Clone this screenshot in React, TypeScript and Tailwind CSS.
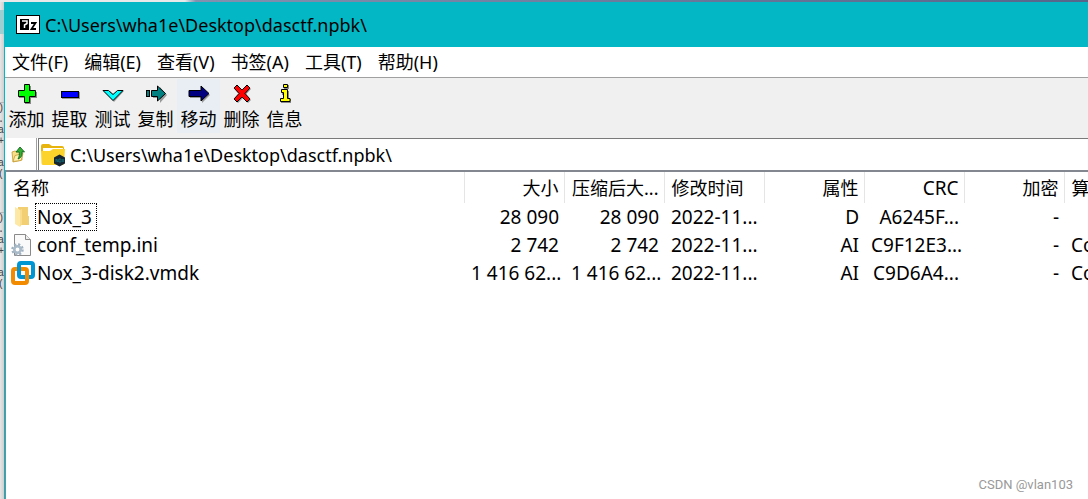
import type { ReactNode } from "react";

const menus = ["文件(F)", "编辑(E)", "查看(V)", "书签(A)", "工具(T)", "帮助(H)"];

const path = "C:\\Users\\wha1e\\Desktop\\dasctf.npbk\\";

// line ends of the editor that sits behind the window
const behind = [")", ".", "a", "+", "", "a", "("];

const PlusIcon = () => (
  <svg width="22" height="22" viewBox="0 0 22 22">
    <path d="M9 3h6v6h6v6h-6v6H9v-6H3V9h6z" fill="#888" />
    <path d="M8.5 1.5h5v6h6v6h-6v6h-5v-6h-6v-6h6z" fill="#0f0" stroke="#000" />
  </svg>
);

const MinusIcon = () => (
  <svg width="22" height="22" viewBox="0 0 22 22">
    <rect x="3" y="9" width="18" height="7" fill="#999" />
    <rect x="2.5" y="8.5" width="17" height="6" fill="#00f" stroke="#000" />
  </svg>
);

const CheckIcon = () => (
  <svg width="22" height="22" viewBox="0 0 22 22">
    <path d="M2 8h6l4 4 4-4h6L12 19z" fill="#999" />
    <path d="M1 7.5h5.5l4.500 4 4.500-4H21L11 17.500z" fill="#0ff" stroke="#000" />
  </svg>
);

const CopyIcon = () => (
  <svg width="22" height="22" viewBox="0 0 22 22">
    <path d="M8 9h7V4l7 8-7 8v-5H8z" fill="#999" />
    <path d="M6.5 7.500h6V3l8 7.500-8 7.500v-4.500h-6z" fill="#008080" stroke="#000" />
    <rect x="1.5" y="7.5" width="3" height="6" fill="#008080" stroke="#000" />
  </svg>
);

const MoveIcon = () => (
  <svg width="22" height="22" viewBox="0 0 22 22">
    <path d="M2 9h12V4l8 8-8 8v-5H2z" fill="#999" />
    <path d="M1 7.500h12V3l8 7.500-8 7.500v-4.500H1z" fill="#000080" stroke="#000" />
  </svg>
);

const DeleteIcon = () => (
  <svg width="22" height="22" viewBox="0 0 22 22">
    <path d="M4 6l3-3 5 5 5-5 3 3-5 5.500 5 5.500-3 3-5-5-5 5-3-3 5-5.500z" fill="#999" />
    <path d="M3 5l3-3 5 5 5-5 3 3-5 5.500 5 5.500-3 3-5-5-5 5-3-3 5-5.500z" fill="#f00" stroke="#000" />
  </svg>
);

const InfoIcon = () => (
  <svg width="22" height="22" viewBox="0 0 22 22">
    <path d="M10 2h5v4h-5zM8 8h7v8h2v4H7v-4h3v-4H8z" fill="#888" />
    <path d="M9.5 1.500h4v3h-4zM7.500 6.500h6v9h2.500v3h-9.500v-3h3v-6h-2z" fill="#ff0" stroke="#000" />
  </svg>
);

const tools: { label: string; icon: ReactNode; active?: boolean }[] = [
  { label: "添加", icon: <PlusIcon /> },
  { label: "提取", icon: <MinusIcon /> },
  { label: "测试", icon: <CheckIcon /> },
  { label: "复制", icon: <CopyIcon /> },
  { label: "移动", icon: <MoveIcon />, active: true },
  { label: "删除", icon: <DeleteIcon /> },
  { label: "信息", icon: <InfoIcon /> },
];

const AppIcon = () => (
  <svg width="24" height="19" viewBox="0 0 24 19" className="shrink-0">
    <rect width="24" height="19" fill="#000" />
    <rect x="1" y="1" width="22" height="17" fill="#fff" />
    <rect x="4" y="4" width="9" height="11" fill="#000" />
    <path d="M6 6h5v2.500L8.500 10v3" fill="none" stroke="#fff" strokeWidth="1.5" />
    <path d="M15 8h4.500L15.500 14H20" fill="none" stroke="#000" strokeWidth="1.8" />
  </svg>
);

const UpFolderIcon = () => (
  <svg width="15" height="17" viewBox="0 0 15 17">
    <path d="M1 6l3-1 2 1 5-1v9L2 16z" fill="#f8e08a" stroke="#c79a31" strokeWidth="0.8" />
    <path d="M2 15.500l2-6 8-2-2 7z" fill="#fdf0b0" stroke="#c79a31" strokeWidth="0.8" />
    <path d="M9 1l4.500 5-2.500-.3c.3 3.500-.5 6-4 7.300 1.500-2.500 1.500-4.500 1.200-7L5 6z" fill="#35b035" stroke="#11651b" strokeWidth="0.9" />
  </svg>
);

const NoxFolderIcon = () => (
  <svg width="25" height="24" viewBox="0 0 25 24" className="shrink-0">
    <path d="M0 3q0-2 2-2h6l3 2h10q2 0 2 2v4H0z" fill="#e6b40c" />
    <path d="M2 5h20v4H2z" fill="#fff" />
    <path d="M0 8h9l3-2h12l-1 15q0 1-2 1H2q-1.500 0-1.500-2z" fill="#fcd32a" />
    <path d="M18.500 11.500l5.500 3v6l-5.500 3-5.500-3v-6z" fill="#172431" />
    <path d="M15 16v3M15 16l2 3v-3M18 16h2v3h-2zM21 16l2 3M23 16l-2 3" fill="none" stroke="#167d8a" strokeWidth="0.7" />
  </svg>
);

const FolderIcon = () => (
  <svg width="24" height="24" viewBox="0 0 24 24" className="shrink-0">
    <path d="M7 2h10v9h1v9H7z" fill="#f3cf74" />
    <path d="M4 2l5 3v17l-5-3z" fill="#fde8a6" />
    <path d="M9 5v17l2-3V4z" fill="#f9dc8c" />
  </svg>
);

const IniIcon = () => (
  <svg width="24" height="24" viewBox="0 0 24 24" className="shrink-0">
    <path d="M3.500 1.500h11l5 5v16h-16z" fill="#fafafa" stroke="#8a8a8a" />
    <path d="M14.500 1.500v5h5" fill="#eee" stroke="#8a8a8a" />
    <circle cx="6.5" cy="16.5" r="5" fill="none" stroke="#9fb0bf" strokeWidth="2.5" strokeDasharray="2.1 1.827" />
    <circle cx="6.5" cy="16.5" r="3.2" fill="#fff" stroke="#a9bac8" strokeWidth="2.6" />
  </svg>
);

const VmdkIcon = () => (
  <svg width="24" height="24" viewBox="0 0 24 24" className="shrink-0">
    <g fill="none" strokeWidth="4">
      <rect x="8" y="2" width="14" height="14" rx="2" stroke="#0095d3" />
      <rect x="2" y="8" width="14" height="14" rx="2" stroke="#f38b00" />
      <path d="M8 5v8" stroke="#0095d3" />
    </g>
  </svg>
);

const columns = [
  { label: "名称" },
  { label: "大小", right: true },
  { label: "压缩后大...", right: true },
  { label: "修改时间" },
  { label: "属性", right: true },
  { label: "CRC", right: true, latin: true },
  { label: "加密", right: true },
  { label: "算法" },
];

const files = [
  {
    name: "Nox_3",
    icon: <FolderIcon />,
    focused: true,
    cells: ["28 090", "28 090", "2022-11...", "D", "A6245F...", "-", ""],
  },
  {
    name: "conf_temp.ini",
    icon: <IniIcon />,
    cells: ["2 742", "2 742", "2022-11...", "AI", "C9F12E3...", "-", "Copy"],
  },
  {
    name: "Nox_3-disk2.vmdk",
    icon: <VmdkIcon />,
    cells: ["1 416 62...", "1 416 62...", "2022-11...", "AI", "C9D6A4...", "-", "Copy"],
  },
];

const LineEnds = () => (
  <div className="border-t border-[#b5b5b5]">
    {behind.map((char, i) => (
      <div key={i} className="flex h-[11px] justify-end">
        {char}
      </div>
    ))}
  </div>
);

export default function App() {
  return (
    <div className="relative flex min-h-screen flex-col overflow-hidden bg-[#e9e9e9] font-['Noto_Sans','Noto_Sans_CJK_SC',sans-serif] text-lg text-black">
      {/* desktop behind the window */}
      <div className="h-[2px] shrink-0 bg-linear-to-r from-[#e9e9e9] from-17% via-[#8291ae] via-18% to-[#56658a]" />

      <div className="flex grow">
        <div
          aria-hidden="true"
          className="flex w-1 shrink-0 flex-col gap-8 overflow-hidden bg-linear-to-r from-[#e6e6e6] to-[#cfcfcf] pt-2 font-['Liberation_Mono',monospace] text-[10px] leading-[11px] text-[#444]"
        >
          <div className="mb-9 h-6 shrink-0 bg-[#9ccfd2]" />
          <LineEnds />
          <LineEnds />
        </div>

        <main className="flex min-w-0 grow flex-col overflow-hidden border-l border-[#04b7c5] bg-white">
          <header className="flex h-[45px] shrink-0 items-center gap-[5px] bg-[#04b7c5] pl-[11px]">
            <AppIcon />
            <h1 className="text-lg leading-6">{path}</h1>
          </header>

          <nav className="flex h-[30px] shrink-0 items-center gap-4 pl-[7px]">
            {menus.map((menu) => (
              <button key={menu} type="button" className="leading-6 whitespace-nowrap">
                {menu}
              </button>
            ))}
          </nav>

          <div className="flex h-[61px] shrink-0 border-t border-[#a0a0a0] bg-[#f0f0f0] pt-px">
            {tools.map((tool) => (
              <button
                key={tool.label}
                type="button"
                className={`flex h-[54px] w-[43px] flex-col items-center pt-1 whitespace-nowrap ${
                  tool.active ? "bg-[#e8eef3]" : ""
                }`}
              >
                {tool.icon}
                <span className="leading-7">{tool.label}</span>
              </button>
            ))}
          </div>

          <div className="flex h-8 shrink-0 bg-white">
            <button
              type="button"
              aria-label="向上"
              className="flex w-8 shrink-0 items-center border-r border-[#a0a0a0] pl-[6px]"
            >
              <UpFolderIcon />
            </button>
            <label className="ml-px flex grow items-center gap-1 border-t border-l border-[#7a7a7a] pl-[2px]">
              <NoxFolderIcon />
              <input
                type="text"
                aria-label="路径"
                defaultValue={path}
                className="min-w-0 grow bg-transparent text-lg leading-6 outline-none"
              />
            </label>
          </div>

          <div className="grow overflow-hidden border-t-2 border-l border-[#828790]">
            <table className="w-[1158px] table-fixed border-collapse">
              <thead>
                <tr className="h-[31px]">
                  {columns.map((col, i) => (
                    <th
                      key={col.label}
                      className={`border-r border-[#e5e5e5] py-0 pr-[5px] pl-[7px] leading-6 font-normal whitespace-nowrap ${
                        i === 0 ? "w-[458px]" : "w-[100px]"
                      } ${col.right ? "text-right" : "text-left"} ${col.latin ? "text-[19px]" : ""}`}
                    >
                      {col.label}
                    </th>
                  ))}
                </tr>
              </thead>
              <tbody className="text-[19px]">
                {files.map((file) => (
                  <tr key={file.name} className="h-7">
                    <td className="py-0 pl-[5px]">
                      <div className="flex items-center">
                        {file.icon}
                        <span
                          className={`h-7 border border-dotted pr-1 pl-px leading-[26px] ${
                            file.focused ? "border-black" : "border-transparent"
                          }`}
                        >
                          {file.name}
                        </span>
                      </div>
                    </td>
                    {file.cells.map((cell, i) => (
                      <td
                        key={i}
                        className={`py-0 pr-[5px] pl-[7px] leading-7 whitespace-nowrap ${
                          columns[i + 1].right ? "text-right" : "text-left"
                        }`}
                      >
                        {cell}
                      </td>
                    ))}
                  </tr>
                ))}
              </tbody>
            </table>
          </div>
        </main>
      </div>

      <span className="absolute right-[15px] bottom-1 font-[Roboto,sans-serif] text-[13px] leading-5 text-[#999]">
        CSDN @vlan103
      </span>
    </div>
  );
}
